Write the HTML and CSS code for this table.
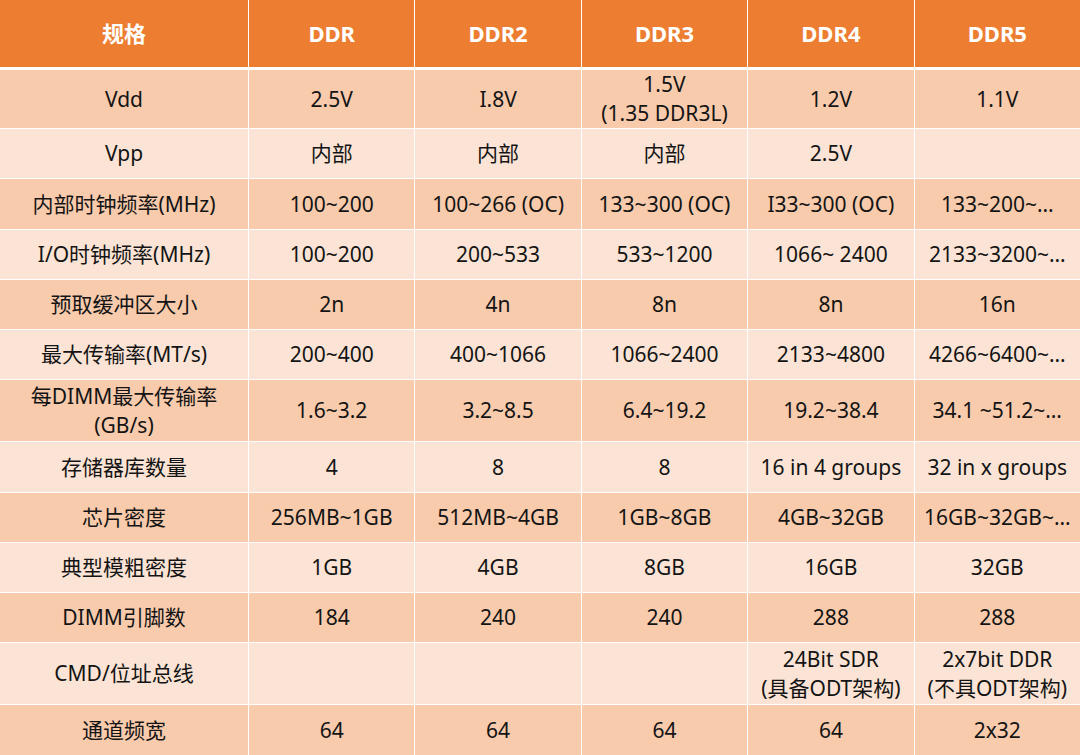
FILE: index.html
```html
<!DOCTYPE html>
<html lang="zh">
<head>
<meta charset="utf-8">
<title>DDR 规格对比</title>
<link rel="stylesheet" href="styles.css">
</head>
<body>
<div class="spec-table">
  <div class="cell head">规格</div>
  <div class="cell head">DDR</div>
  <div class="cell head">DDR2</div>
  <div class="cell head">DDR3</div>
  <div class="cell head">DDR4</div>
  <div class="cell head">DDR5</div>

  <div class="cell dark">Vdd</div>
  <div class="cell dark">2.5V</div>
  <div class="cell dark">I.8V</div>
  <div class="cell dark">1.5V<br>(1.35 DDR3L)</div>
  <div class="cell dark">1.2V</div>
  <div class="cell dark">1.1V</div>

  <div class="cell light">Vpp</div>
  <div class="cell light">内部</div>
  <div class="cell light">内部</div>
  <div class="cell light">内部</div>
  <div class="cell light">2.5V</div>
  <div class="cell light"></div>

  <div class="cell dark">内部时钟频率(MHz)</div>
  <div class="cell dark">100~200</div>
  <div class="cell dark">100~266 (OC)</div>
  <div class="cell dark">133~300 (OC)</div>
  <div class="cell dark">I33~300 (OC)</div>
  <div class="cell dark">133~200~…</div>

  <div class="cell light">I/O时钟频率(MHz)</div>
  <div class="cell light">100~200</div>
  <div class="cell light">200~533</div>
  <div class="cell light">533~1200</div>
  <div class="cell light">1066~ 2400</div>
  <div class="cell light">2133~3200~…</div>

  <div class="cell dark">预取缓冲区大小</div>
  <div class="cell dark">2n</div>
  <div class="cell dark">4n</div>
  <div class="cell dark">8n</div>
  <div class="cell dark">8n</div>
  <div class="cell dark">16n</div>

  <div class="cell light">最大传输率(MT/s)</div>
  <div class="cell light">200~400</div>
  <div class="cell light">400~1066</div>
  <div class="cell light">1066~2400</div>
  <div class="cell light">2133~4800</div>
  <div class="cell light">4266~6400~…</div>

  <div class="cell dark">每DIMM最大传输率<br>(GB/s)</div>
  <div class="cell dark">1.6~3.2</div>
  <div class="cell dark">3.2~8.5</div>
  <div class="cell dark">6.4~19.2</div>
  <div class="cell dark">19.2~38.4</div>
  <div class="cell dark">34.1 ~51.2~…</div>

  <div class="cell light">存储器库数量</div>
  <div class="cell light">4</div>
  <div class="cell light">8</div>
  <div class="cell light">8</div>
  <div class="cell light">16 in 4 groups</div>
  <div class="cell light">32 in x groups</div>

  <div class="cell dark">芯片密度</div>
  <div class="cell dark">256MB~1GB</div>
  <div class="cell dark">512MB~4GB</div>
  <div class="cell dark">1GB~8GB</div>
  <div class="cell dark">4GB~32GB</div>
  <div class="cell dark">16GB~32GB~…</div>

  <div class="cell light">典型模粗密度</div>
  <div class="cell light">1GB</div>
  <div class="cell light">4GB</div>
  <div class="cell light">8GB</div>
  <div class="cell light">16GB</div>
  <div class="cell light">32GB</div>

  <div class="cell dark">DIMM引脚数</div>
  <div class="cell dark">184</div>
  <div class="cell dark">240</div>
  <div class="cell dark">240</div>
  <div class="cell dark">288</div>
  <div class="cell dark">288</div>

  <div class="cell light">CMD/位址总线</div>
  <div class="cell light"></div>
  <div class="cell light"></div>
  <div class="cell light"></div>
  <div class="cell light">24Bit SDR<br>(具备ODT架构)</div>
  <div class="cell light">2x7bit DDR<br>(不具ODT架构)</div>

  <div class="cell dark">通道频宽</div>
  <div class="cell dark">64</div>
  <div class="cell dark">64</div>
  <div class="cell dark">64</div>
  <div class="cell dark">64</div>
  <div class="cell dark">2x32</div>
</div>
</body>
</html>
```

FILE: styles.css
```css
html, body {
  margin: 0;
  padding: 0;
  background: #ffffff;
}

.spec-table {
  width: 1080px;
  height: 755px;
  display: grid;
  grid-template-columns: 248px repeat(5, 1fr);
  grid-template-rows: 69px 58px 49px 50px 49px 49px 49px 61px 50px 49px 49px 49px 61px 50px;
  gap: 1px;
  background: #ffffff;
  font-family: "Noto Sans", "Noto Sans CJK SC", sans-serif;
  font-size: 21px;
  line-height: 29px;
  color: #141414;
}

.cell {
  display: flex;
  align-items: center;
  justify-content: center;
  text-align: center;
  white-space: nowrap;
  overflow: hidden;
}

.head {
  background: #ed7d31;
  color: #ffffff;
  font-weight: 700;
  font-size: 22px;
  border-bottom: 2px solid #ffffff;
}

.dark {
  background: #f8cbad;
}

.light {
  background: #fbe4d5;
}
```
